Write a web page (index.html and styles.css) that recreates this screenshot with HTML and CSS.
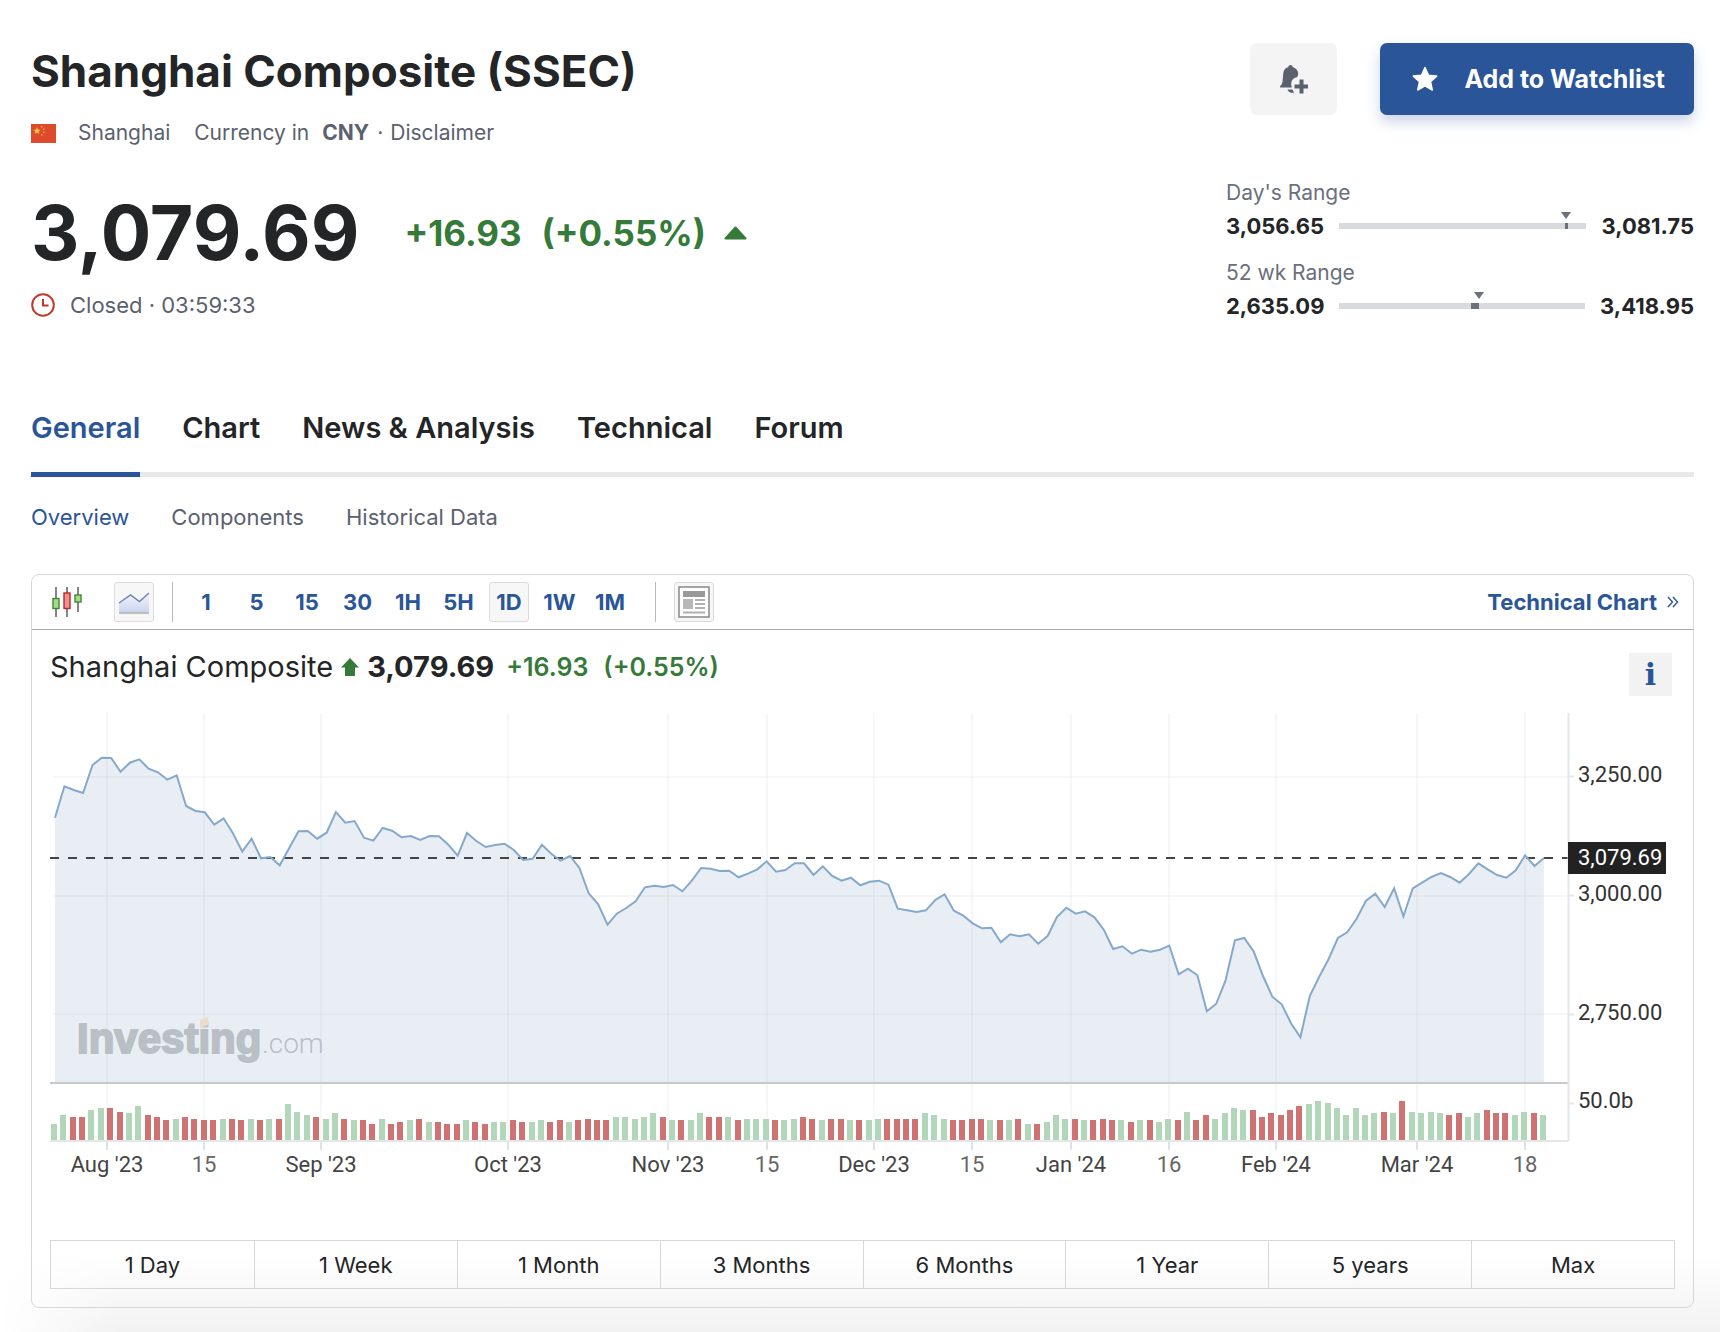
FILE: index.html
```html
<!DOCTYPE html>
<html lang="en">
<head>
<meta charset="utf-8">
<title>Shanghai Composite (SSEC)</title>
<link rel="stylesheet" href="styles.css">
</head>
<body>
<main class="page">
  <header class="masthead">
    <div>
      <h1 class="title">Shanghai Composite (SSEC)</h1>
      <div class="meta">
        <svg class="flag" viewBox="0 0 25 19" width="25" height="19" aria-hidden="true">
          <rect width="25" height="19" fill="#dd4a2c"/>
          <path d="M6 3l1 2.700h2.800L7.600 7.400l.8 2.700L6 8.500l-2.400 1.600.8-2.700L2.200 5.700H5z" fill="#f8c943"/>
          <path d="M10 2h1.500v1.500H10zM12 4.500h1.500V6H12zM12 7.500h1.500V9H12zM10 10h1.500v1.500H10z" fill="#f2a83c"/>
        </svg>
        <span class="market">Shanghai</span>
        <span class="currency">Currency in</span>
        <b class="code">CNY</b>
        <span>·</span>
        <a href="#" class="disclaimer">Disclaimer</a>
      </div>
    </div>
    <div class="actions">
      <button type="button" class="alert-btn" aria-label="Create alert">
        <svg viewBox="0 0 30 30" width="30" height="30" aria-hidden="true">
          <path d="M11.500 1c1.200 0 2 .7 2.100 1.900 3.300.9 5.400 3.300 5.600 6.600.1 1.400-.4 2.700-1.300 3.800l-1.900.5c-2.300 1.300-3.600 3-3.800 5.200-.1 1.600.1 3 .7 4.500H1.500c-.7 0-.8-.7-.4-1.200 1.600-1.600 2.200-3 2.500-5l.6-7.300c.2-3.700 1.900-6.200 5.200-7.100C9.600 1.700 10.300 1 11.500 1z" fill="#5b616e"/>
          <path d="M8.500 25.500h5l1.500 3c-2.500 1-5.500-.2-6.500-3z" fill="#5b616e"/>
          <path d="M20.500 15.500h4v5H29v4h-4.500v5h-4v-5h-5v-4h5z" fill="#5b616e"/>
        </svg>
      </button>
      <button type="button" class="watch-btn">
        <svg viewBox="0 0 26 26" width="26" height="26" aria-hidden="true"><path d="M13 1.500l3.500 7.700 8.200.9-6.200 5.600 1.800 8.300L13 19.800 5.700 24l1.800-8.300-6.200-5.600 8.200-.9z" fill="#fff" stroke="#fff" stroke-width="1.500" stroke-linejoin="round"/></svg>
        <span>Add to Watchlist</span>
      </button>
    </div>
  </header>

  <section class="quote">
    <div>
      <div class="price-row">
        <span class="price">3,079.69</span>
        <span class="change"><span>+16.93</span><span>(+0.55%)</span></span>
        <svg viewBox="0 0 23 14" width="23" height="14" aria-hidden="true"><path d="M11.500 1.500L21.500 12.500h-20z" fill="#357a38" stroke="#357a38" stroke-width="2" stroke-linejoin="round"/></svg>
      </div>
      <div class="status">
        <svg viewBox="0 0 24 24" width="24" height="24" fill="none" stroke="#c03a2b" stroke-width="2" aria-hidden="true"><circle cx="12" cy="12" r="10.800"/><path d="M12 6v6.500h5.500"/></svg>
        <span>Closed · 03:59:33</span>
      </div>
    </div>
    <div class="ranges">
      <div class="range">
        <div class="range-label">Day's Range</div>
        <div class="range-row"><span>3,056.65</span><div class="track"><i class="mark" style="width:1.200%;left:91.200%"></i><i class="pin" style="left:91.800%"></i></div><span>3,081.75</span></div>
      </div>
      <div class="range">
        <div class="range-label">52 wk Range</div>
        <div class="range-row"><span>2,635.09</span><div class="track"><i class="mark" style="width:3.300%;left:53.700%"></i><i class="pin" style="left:56.700%"></i></div><span>3,418.95</span></div>
      </div>
    </div>
  </section>

  <nav class="tabs">
    <a href="#" class="tab active">General</a>
    <a href="#" class="tab">Chart</a>
    <a href="#" class="tab">News &amp; Analysis</a>
    <a href="#" class="tab">Technical</a>
    <a href="#" class="tab">Forum</a>
  </nav>
  <nav class="subtabs">
    <a href="#" class="current">Overview</a>
    <a href="#">Components</a>
    <a href="#">Historical Data</a>
  </nav>

  <section class="card">
    <div class="toolbar">
      <button type="button" class="tool" aria-label="Candlestick chart">
        <svg viewBox="0 0 30 34" width="30" height="34" aria-hidden="true">
          <path d="M4 2v30M15 2v30M26 2v25" stroke="#444" stroke-width="1.300"/>
          <rect x="1" y="13.500" width="6" height="10" fill="#a8d98d" stroke="#3c8a35" stroke-width="1.400"/>
          <rect x="12" y="8" width="6" height="15.500" fill="#f09090" stroke="#b52a2a" stroke-width="1.400"/>
          <rect x="23" y="10" width="6" height="7" fill="#a8d98d" stroke="#3c8a35" stroke-width="1.400"/>
        </svg>
      </button>
      <button type="button" class="tool on area-tool" aria-label="Area chart">
        <svg viewBox="0 0 32 26" width="32" height="26" aria-hidden="true">
          <defs><linearGradient id="fade" x1="0" y1="0" x2="0" y2="1"><stop offset="0" stop-color="#f3f5fb"/><stop offset="1" stop-color="#cbd6ee"/></linearGradient></defs>
          <path d="M1 14L12.500 6l9 6.500L31 4v19H1z" fill="url(#fade)"/>
          <path d="M1 14L12.500 6l9 6.500L31 4" fill="none" stroke="#6f86b5" stroke-width="1.500"/>
          <path d="M1 24h30" stroke="#aaa" stroke-width="1.500"/>
        </svg>
      </button>
      <span class="divider"></span>
      <div class="intervals">
        <button type="button">1</button><button type="button">5</button><button type="button">15</button><button type="button">30</button><button type="button">1H</button><button type="button">5H</button><button type="button" class="on">1D</button><button type="button">1W</button><button type="button">1M</button>
      </div>
      <span class="divider"></span>
      <button type="button" class="tool on" aria-label="News on chart">
        <svg viewBox="0 0 32 32" width="32" height="32" aria-hidden="true">
          <rect x="1" y="1" width="30" height="30" fill="#fff" stroke="#888" stroke-width="1.500"/>
          <path d="M5 5h22v6H5z" fill="#999"/><path d="M5 13h10v10H5z" fill="#b8b8b8"/>
          <path d="M17 14h10M17 18h10M17 22h10M5 26.500h22" stroke="#b0b0b0" stroke-width="2"/>
        </svg>
      </button>
      <a href="#" class="tech-link">Technical Chart
        <svg viewBox="0 0 12 12" width="12" height="12" fill="none" stroke="#2b5797" stroke-width="1.400" aria-hidden="true"><path d="M1 1l4.500 5L1 11M6 1l4.500 5L6 11"/></svg>
      </a>
    </div>

    <div class="chart-head">
      <h2 class="chart-title">Shanghai Composite</h2>
      <svg viewBox="0 0 18 18" width="18" height="18" aria-hidden="true"><path d="M9 0l9 9.500h-4V18H4V9.500H0z" fill="#357a38"/></svg>
      <span class="chart-price">3,079.69</span>
      <span class="chart-change"><span>+16.93</span><span>(+0.55%)</span></span>
      <button type="button" class="info-btn" aria-label="Chart information">i</button>
    </div>

    <svg class="chart" id="chart" viewBox="0 0 1625 480" role="img" aria-label="Shanghai Composite price and volume">
      <path id="area" class="area"/>
      <g id="grid" class="grid"></g>
      <path class="dash" d="M0 146H1518"/>
      <path id="line" class="line"/>
      <g id="bars"></g>
      <path class="split" d="M0 371H1518"/>
      <path class="axis" d="M1518.500 1V429M0 429H1518M1518 64.500h6M1518 183.500h6M1518 302.500h6M1518 391.500h6"/>
      <g class="brand">
        <text class="brand-name" x="27" y="341">Investing</text>
        <path d="M150 308l8-3v8l-8 3z" fill="#e8dccb"/>
        <text class="brand-suffix" x="212" y="341">.com</text>
      </g>
      <g class="y-labels">
        <text x="1528" y="70">3,250.00</text>
        <text x="1528" y="189">3,000.00</text>
        <text x="1528" y="308">2,750.00</text>
        <text x="1528" y="396">50.0b</text>
        <rect x="1518" y="130" width="98" height="32" fill="#222"/>
        <text x="1528" y="153" class="last">3,079.69</text>
      </g>
      <g id="x-labels" class="x-labels"></g>
    </svg>

    <div class="periods">
      <button type="button">1 Day</button><button type="button">1 Week</button><button type="button">1 Month</button><button type="button">3 Months</button><button type="button">6 Months</button><button type="button">1 Year</button><button type="button">5 years</button><button type="button">Max</button>
    </div>
  </section>
</main>
<script src="chart.js"></script>
</body>
</html>
```
FILE: styles.css
```css
* { box-sizing: border-box; }
body {
  margin: 0;
  background: #fff;
  color: #232526;
  font-family: Inter, "Liberation Sans", sans-serif;
  font-size: 22px;
  line-height: 28px;
}
a { color: inherit; text-decoration: none; }
button { font: inherit; color: inherit; border: 0; background: none; padding: 0; margin: 0; }
svg { display: block; flex: none; }

.page {
  min-height: 100vh;
  padding: 42px 26px 24px 31px;
  background:
    linear-gradient(to right, #fff, transparent 120px),
    linear-gradient(to top, #f2f2f2, #fff 80px);
}

.masthead { display: flex; justify-content: space-between; align-items: flex-start; }
.title { margin: 0; font-size: 44px; line-height: 58px; font-weight: 700; }
.meta { display: flex; align-items: center; margin-top: 19px; color: #5b616e; font-size: 21px; }
.market { margin-left: 22px; }
.currency { margin: 0 13px 0 24px; }
.code { margin-right: 8px; }
.disclaimer { margin-left: 7px; }

.actions { display: flex; gap: 43px; margin-top: 1px; }
.alert-btn { display: grid; place-items: center; width: 87px; height: 72px; border-radius: 7px; background: #f4f4f4; }
.watch-btn {
  display: flex; align-items: center; gap: 26px; height: 72px; padding: 0 29px 0 32px;
  border-radius: 7px; background: #2a5599; color: #fff; font-size: 25px; font-weight: 700;
  box-shadow: 0 7px 14px rgba(42, 85, 153, .24);
}

.quote { display: flex; justify-content: space-between; margin-top: 29px; }
.price-row { display: flex; align-items: center; margin-top: 15px; }
.price { font-size: 75px; line-height: 84px; font-weight: 700; }
.change { display: flex; gap: 20px; margin: 0 18px 0 45px; color: #357a38; font-size: 35px; font-weight: 700; }
.status { display: flex; align-items: center; gap: 15px; margin-top: 16px; color: #5b616e; }

.ranges { width: 468px; color: #232526; }
.range { height: 80px; }
.range-label { color: #6a707c; font-size: 21px; line-height: 34px; }
.range-row { display: flex; align-items: center; gap: 15px; font-weight: 700; line-height: 32px; }
.track { position: relative; flex: 1; height: 6px; background: #d9dadd; }
.mark { position: absolute; top: 0; height: 6px; background: #6a707c; }
.pin { position: absolute; top: -11px; margin-left: -5px; border: 5px solid transparent; border-top: 7px solid #6a707c; border-bottom: 0; }

.tabs { display: flex; gap: 42px; margin-top: 74px; border-bottom: 5px solid #e6e8e9; font-size: 29px; font-weight: 600; line-height: 36px; }
.tab { padding-bottom: 26px; margin-bottom: -5px; border-bottom: 5px solid transparent; }
.tab.active { color: #2a5599; border-color: #2a5599; }
.subtabs { display: flex; gap: 42px; margin-top: 26px; color: #5b616e; }
.subtabs .current { color: #2a5599; }

.card { margin-top: 43px; border: 1px solid #d5d8da; border-radius: 8px; }
.toolbar { display: flex; align-items: center; height: 55px; padding: 0 14px 0 15px; border-bottom: 1px solid #a5a9ad; }
.tool { display: grid; place-items: center; width: 40px; height: 40px; border: 1px solid transparent; border-radius: 3px; }
.tool.on, .intervals .on { background: #f7f7f7; border-color: #d9dbde; }
.area-tool { margin-left: 27px; }
.divider { width: 1px; height: 40px; margin: 0 18px; background: #b8bcc0; }
.intervals { display: flex; justify-content: space-between; width: 444px; margin: 0 7px 0 -5px; color: #2a5599; font-weight: 700; }
.intervals button { width: 40px; height: 40px; border: 1px solid transparent; border-radius: 3px; }
.tech-link { display: flex; align-items: center; gap: 10px; margin-left: auto; color: #2a5599; font-weight: 700; }

.chart-head { display: flex; align-items: center; height: 80px; padding: 0 21px 6px 18px; }
.chart-title { margin: 0 8px 0 0; font-size: 29px; font-weight: 400; }
.chart-price { margin: 0 12px 0 8px; font-size: 29px; font-weight: 700; }
.chart-change { display: flex; gap: 15px; color: #357a38; font-size: 25px; font-weight: 600; }
.info-btn {
  align-self: flex-end; width: 43px; height: 43px; margin: 0 0 8px auto; background: #f2f2f2;
  color: #2a5599; font: 700 30px/43px "DejaVu Serif", serif;
}

.chart { width: 100%; height: auto; padding: 0 18px; margin-top: 2px; font: 22px Roboto, sans-serif; }
.grid { stroke: rgba(130, 140, 150, .07); stroke-width: 2; }
.grid .ticks { stroke: #dde2e6; }
.dash { stroke: #444; stroke-width: 2; stroke-dasharray: 9 9; }
.area { fill: rgba(40, 85, 150, .1); }
.line { fill: none; stroke: #85a9cc; stroke-width: 2; }
.split { stroke: #c6cacd; stroke-width: 2; }
.axis { fill: none; stroke: #e4e6e8; stroke-width: 2; }
.up { fill: #b2d6ba; }
.down { fill: #cf7272; }
.brand text { fill: #b9bfc4; }
.brand-name { font: 700 42px "Liberation Sans", sans-serif; stroke: #b9bfc4; stroke-width: 2; }
.brand-suffix { font: 300 28px Roboto, sans-serif; }
.y-labels { fill: #333; }
.y-labels .last { fill: #fff; }
.x-labels { fill: #444; text-anchor: middle; }
.x-labels .minor { fill: #666; }

.periods { display: grid; grid-template-columns: repeat(8, 1fr); margin: 48px 18px 18px; border: 1px solid #d5d8da; }
.periods button { height: 47px; }
.periods button + button { border-left: 1px solid #d5d8da; }
```
FILE: chart.js
```js
// Daily closing levels, in thirds of a unit below the top of the price pane.
const closes = [
  353,259,270,279,195,173,174,215,188,178,206,217,239,226,318,333,337,374,355,400,
  455,416,475,471,496,445,394,393,416,398,336,368,363,413,422,384,392,412,408,420,
  408,409,434,467,399,423,441,435,431,450,480,476,434,461,482,468,504,580,612,674,
  641,624,604,562,557,561,555,574,542,504,506,513,512,532,521,508,484,515,510,490,
  490,525,499,528,542,533,556,545,542,554,626,631,636,631,600,583,632,647,670,685,
  683,727,703,709,703,731,708,651,623,641,634,652,689,747,739,761,749,755,749,737,
  823,806,826,934,912,842,721,714,754,828,890,913,970,1012,888,831,778,714,697,656,
  602,581,621,565,649,565,548,531,519,531,548,522,490,508,525,533,511,466,498,474
];

// Daily volume: step count, negative on a falling day.
const volumes = [
  9,14,-13,-13,17,18,-18,-16,15,19,-14,-13,-11,12,-13,-12,-11,-11,12,-12,
  -11,12,-11,12,-12,20,16,14,-13,12,15,-12,11,-11,-9,12,-9,-10,11,-12,
  10,-10,-9,-9,11,-10,-9,10,10,-11,-10,10,11,-10,-11,10,-11,-12,-11,-11,
  13,13,12,13,15,-13,11,-11,11,15,-13,-13,13,-11,12,12,12,-11,11,12,
  -13,-12,11,-12,-12,11,-11,11,12,-12,-12,-12,-12,15,14,12,-11,-11,-12,-12,
  11,-11,11,-12,9,-9,10,14,12,-12,11,-11,-12,-11,11,-10,11,-11,10,12,
  -11,16,-11,-14,12,15,18,17,-17,-13,-15,-14,-17,-19,20,22,21,18,14,18,
  14,15,-16,15,-22,16,15,16,15,-14,-15,13,15,-17,-15,-15,14,16,-15,14
];

const dates = [
  [57, "Aug '23"], [154, "15"], [271, "Sep '23"], [458, "Oct '23"], [618, "Nov '23"],
  [717, "15"], [824, "Dec '23"], [922, "15"], [1021, "Jan '24"], [1119, "16"],
  [1226, "Feb '24"], [1367, "Mar '24"], [1475, "18"]
];

const NS = "http://www.w3.org/2000/svg";
const STEP = 9.364;
const byId = (id) => document.getElementById(id);

function add(parent, name, attrs, text) {
  const node = document.createElementNS(NS, name);
  for (const key in attrs) node.setAttribute(key, attrs[key]);
  if (text) node.textContent = text;
  parent.appendChild(node);
}

const path = "M" + closes
  .map((v, i) => (5 + i * STEP).toFixed(1) + " " + (v / 3 - 12).toFixed(1))
  .join("L");
byId("line").setAttribute("d", path);
byId("area").setAttribute("d", path + "V370H5Z");

volumes.forEach((v, i) => {
  const h = Math.round(Math.abs(v) * 1.78);
  add(byId("bars"), "rect", {
    x: Math.max(0, Math.round(1 + i * STEP)), y: 428 - h, width: 6, height: h,
    class: v > 0 ? "up" : "down"
  });
});

[65, 184, 302].forEach((y) => add(byId("grid"), "path", { d: `M3 ${y}H1518` }));
dates.forEach(([x, label]) => {
  add(byId("grid"), "path", { d: `M${x} 1V428` });
  add(byId("grid"), "path", { d: `M${x} 430V438`, class: "ticks" });
  add(byId("x-labels"), "text", { x, y: 460, class: label.length < 3 ? "minor" : "major" }, label);
});
```
